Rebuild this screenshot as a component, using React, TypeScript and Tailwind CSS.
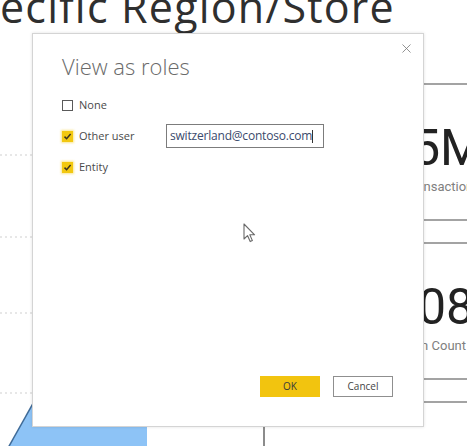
import { X } from 'lucide-react'

function CheckBox({ checked }: { checked?: boolean }) {
  if (!checked) {
    return <div className="w-[11px] h-[11px] shrink-0 border-[1.5px] border-[#5a5a5a] bg-white" />
  }
  return (
    <div className="w-[11px] h-[11px] shrink-0 bg-[#f2c811] shadow-[0_0_2px_1px_rgba(242,200,17,0.45)] flex items-center justify-center">
      <svg width="9" height="9" viewBox="0 0 9 9">
        <path d="M1.5 4.6 L3.6 6.7 L7.6 2" fill="none" stroke="#3b3320" strokeWidth="1.5" />
      </svg>
    </div>
  )
}

function ChartArea() {
  const grid = [111, 193, 269, 349]
  return (
    <svg width="263" height="402" viewBox="0 0 263 402">
      {grid.map(y => (
        <line key={y} x1="0" y1={y} x2="263" y2={y} stroke="#cfcfcf" strokeWidth="1" strokeDasharray="2 3" />
      ))}
      <polygon points="8,404 100,240 147,200 147,404" fill="#8dc3f6" />
      <line x1="8" y1="404" x2="100" y2="240" stroke="#3f6b98" strokeWidth="1.5" />
    </svg>
  )
}

function Card({ value, valueMl, label, labelMl }: { value: string; valueMl: string; label: string; labelMl: string }) {
  return (
    <div className="h-[138px] shrink-0 border-y-2 border-[#a3a3a3] whitespace-nowrap">
      <div className={`mt-[38px] h-[50px] text-[50px] leading-none text-[#222] ${valueMl}`}>{value}</div>
      <div className={`mt-[5px] text-[13px] leading-[17px] text-[#808080] ${labelMl}`}>{label}</div>
    </div>
  )
}

export default function App() {
  return (
    <div className="relative w-[467px] h-[446px] overflow-hidden bg-white font-['Roboto',sans-serif]">
      <div className="h-[44px] flex flex-col">
        <h1 className="-mt-[15px] whitespace-nowrap font-['Open_Sans',sans-serif] text-[43px] tracking-[1.2px] leading-none text-[#2f2f2f]">ecific Region/Store</h1>
      </div>

      <div className="flex h-[402px]">
        <div className="w-[263px] shrink-0">
          <ChartArea />
        </div>
        <div className="flex-1 border-l-2 border-[#8c8c8c] pt-[39px] flex flex-col gap-[21px]">
          <Card value="5M" valueMl="ml-[147px]" label="Transactions" labelMl="ml-[140px]" />
          <Card value="08" valueMl="ml-[153px]" label="Transaction Count" labelMl="ml-[95px]" />
          <Card value="" valueMl="" label="" labelMl="" />
        </div>
      </div>

      {/* modal dialog */}
      <div className="absolute left-[32px] top-[33px] w-[392px] h-[394px] bg-white border border-[#d4d4d4] shadow-[0_0_3px_rgba(0,0,0,0.12)] flex flex-col pl-[29px] pr-[9px] pb-[29px] font-['Open_Sans',sans-serif]">
        <div className="flex justify-between items-start">
          <h2 className="mt-[21px] text-[22px] font-light leading-none text-[#6a6a6a]">View as roles</h2>
          <X size={15} strokeWidth={1.3} className="mt-[7px] text-[#7a7a7a]" />
        </div>

        <div className="mt-[22px] flex items-center h-[12px] gap-[6px]">
          <CheckBox />
          <span className="text-[11px] text-[#4a4a4a]">None</span>
        </div>

        <div className="mt-[13px] flex items-center h-[24px] gap-[6px]">
          <CheckBox checked />
          <span className="w-[81px] text-[11px] text-[#4a4a4a]">Other user</span>
          <div className="w-[158px] h-[24px] border-[1.5px] border-[#7c7c7c] flex items-center pl-[3px]">
            <span className="text-[12px] leading-none text-[#3a4a6c] tracking-[-0.2px]">switzerland@contoso.com</span>
            <span className="w-px h-[13px] bg-[#333]" />
          </div>
        </div>

        <div className="mt-[13px] flex items-center h-[12px] gap-[6px]">
          <CheckBox checked />
          <span className="text-[11px] text-[#4a4a4a]">Entity</span>
        </div>

        <div className="mt-auto mr-[21px] flex justify-end gap-[13px]">
          <button className="w-[60px] h-[21px] bg-[#f2c40f] text-[10px] text-[#3a3a3a]">OK</button>
          <button className="w-[60px] h-[21px] border border-[#8f8f8f] bg-white text-[10px] text-[#444]">Cancel</button>
        </div>
      </div>

      {/* mouse pointer */}
      <svg className="absolute left-[243px] top-[223px]" width="14" height="21" viewBox="0 0 14 21">
        <path d="M1 1 L1 16 L4.5 12.6 L7.2 18.6 L9.4 17.6 L6.8 11.8 L11.6 11.8 Z" fill="#fff" stroke="#6a6a6a" strokeWidth="1.1" strokeLinejoin="round" />
      </svg>
    </div>
  )
}
